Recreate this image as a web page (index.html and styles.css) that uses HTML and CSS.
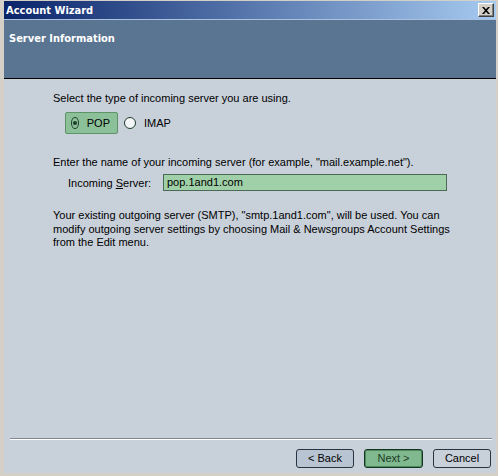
FILE: index.html
```html
<!DOCTYPE html>
<html>
<head>
<meta charset="utf-8">
<link rel="stylesheet" href="styles.css">
</head>
<body>
<div class="window">
  <div class="titlebar">
    <span class="title">Account Wizard</span>
    <span class="close"><svg width="8" height="7" viewBox="0 0 8 7"><path d="M0 0h2l2 2.3L6 0h2L5 3.5 8 7H6L4 4.7 2 7H0l3-3.5z" fill="#000"/></svg></span>
  </div>
  <div class="header"><div class="header-title">Server Information</div></div>
  <div class="content">
    <div class="main">
      <p class="line">Select the type of incoming server you are using.</p>
      <div class="radios">
        <div class="radio selected"><span class="dot on"></span><span>POP</span></div>
        <div class="radio"><span class="dot"></span><span>IMAP</span></div>
      </div>
      <p class="line gap">Enter the name of your incoming server (for example, "mail.example.net").</p>
      <div class="field">
        <span class="label">Incoming <u>S</u>erver:</span>
        <div class="input">pop.1and1.com</div>
      </div>
      <p class="para">Your existing outgoing server (SMTP), "smtp.1and1.com", will be used. You can modify outgoing server settings by choosing Mail &amp; Newsgroups Account Settings from the Edit menu.</p>
    </div>
    <div class="sep"></div>
    <div class="buttons">
      <div class="btn back">&lt; Back</div>
      <div class="btn next">Next &gt;</div>
      <div class="btn cancel">Cancel</div>
    </div>
  </div>
</div>
</body>
</html>
```
FILE: styles.css
```css
html, body { margin: 0; padding: 0; }
body {
  background: #d4d0c8;
  font-family: "Liberation Sans", Arial, sans-serif;
  font-size: 11px;
  color: #000;
}
.window {
  width: 498px;
  height: 476px;
  box-sizing: border-box;
  padding: 1px 2px 3px 4px;
  display: flex;
  flex-direction: column;
}
.titlebar {
  height: 18px;
  background: linear-gradient(to right, #0a246a, #a6caf0);
  display: flex;
  align-items: center;
  justify-content: space-between;
  padding: 0 2px 0 2px;
  border-bottom: 1px solid #a8c2e0;
}
.title {
  color: #fff;
  font-family: "DejaVu Sans Condensed", "DejaVu Sans", sans-serif;
  font-weight: bold;
  font-size: 11px;
}
.close {
  width: 16px;
  height: 14px;
  box-sizing: border-box;
  background: #d4d0c8;
  border: 1px solid;
  border-color: #fff #404040 #404040 #fff;
  box-shadow: inset -1px -1px 0 #808080;
  display: flex;
  align-items: center;
  justify-content: center;
}
.header {
  height: 59px;
  background: #5a7591;
  border-bottom: 1px solid #000;
  padding: 12px 0 0 5px;
  box-sizing: border-box;
}
.header-title {
  color: #fff;
  font-family: "DejaVu Sans Condensed", "DejaVu Sans", sans-serif;
  font-weight: bold;
  font-size: 11px;
}
.content {
  flex: 1;
  background: #c8d0da;
  display: flex;
  flex-direction: column;
}
.main {
  flex: 1;
  padding: 13px 0 0 49px;
}
.line { margin: 0; line-height: 13px; }
.gap { margin-top: 22px; }
.radios {
  display: flex;
  align-items: center;
  margin: 7px 0 0 12px;
}
.radio {
  display: flex;
  align-items: center;
  height: 22px;
  padding: 0 7px 0 5px;
  gap: 8px;
}
.radio.selected {
  background: #8cc098;
  border: 1px solid #5e9268;
  border-radius: 2px;
  box-sizing: border-box;
  width: 53px;
}
.radio + .radio { padding-left: 6px; }
.dot {
  width: 12px;
  height: 12px;
  border-radius: 50%;
  border: 1px solid #1c3c2a;
  background: #f4f6f8;
  box-sizing: border-box;
  display: flex;
  align-items: center;
  justify-content: center;
}
.dot.on { background: #8cc098; }
.dot.on::after {
  content: "";
  width: 4px;
  height: 4px;
  border-radius: 50%;
  background: #1c3c2a;
}
.field {
  display: flex;
  align-items: center;
  margin: 5px 0 0 15px;
}
.label { width: 95px; }
.input {
  width: 284px;
  height: 17px;
  box-sizing: border-box;
  background: #a0d0a8;
  border: 1px solid #4a6a55;
  padding: 1px 3px;
  line-height: 13px;
}
.para {
  margin: 18px 0 0 0;
  width: 400px;
  line-height: 13.5px;
}
.sep {
  margin: 0 4px 0 6px;
  height: 1px;
  background: #7e8896;
  border-bottom: 1px solid #fff;
}
.buttons {
  display: flex;
  justify-content: flex-end;
  gap: 10px;
  padding: 9px 5px 5px 0;
}
.btn {
  height: 19px;
  box-sizing: border-box;
  border: 1px solid #2a3440;
  border-radius: 3px;
  display: flex;
  align-items: center;
  justify-content: center;
  line-height: 13px;
}
.back { width: 58px; background: #b8c4d2; }
.next { width: 59px; background: #80b890; border-color: #15351f; box-shadow: inset 0 0 0 1px #4f8a5e; color: #1c3c22; }
.cancel { width: 58px; background: #c8d0da; }
```
